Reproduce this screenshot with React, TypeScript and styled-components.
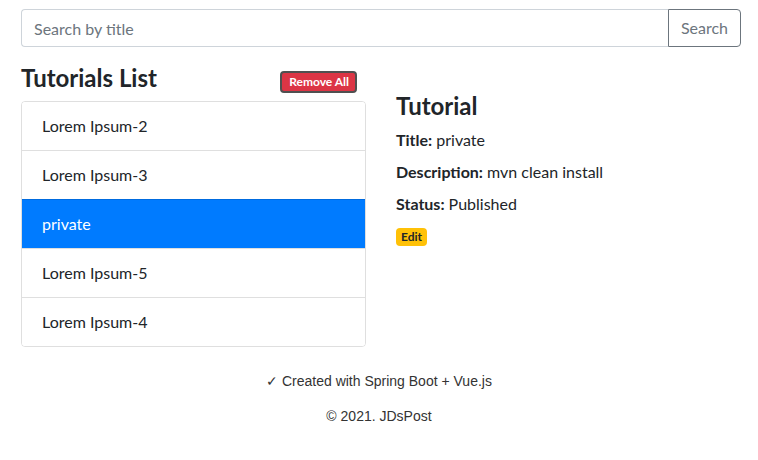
import React from "react";
import styled, { createGlobalStyle } from "styled-components";

const GlobalStyle = createGlobalStyle`
  html, body { margin: 0; padding: 0; background: #fff; }
  body {
    font-family: Lato, "Open Sans", sans-serif;
    font-size: 16px;
    line-height: 1.5;
    color: #212529;
  }
  * { box-sizing: border-box; }
`;

const Page = styled.div`
  width: 720px;
  margin-left: 21px;
  padding-top: 9px;
`;

const InputGroup = styled.div`
  display: flex;
  width: 100%;
  margin-bottom: 16px;
`;

const SearchInput = styled.input`
  flex: 1;
  height: 38px;
  padding: 6px 12px;
  font-family: inherit;
  font-size: 16px;
  color: #495057;
  border: 1px solid #ced4da;
  border-right: none;
  border-radius: 4px 0 0 4px;
  outline: none;
  &::placeholder { color: #6c757d; }
`;

const OutlineButton = styled.button`
  height: 38px;
  padding: 6px 12px;
  font-family: inherit;
  font-size: 16px;
  line-height: 24px;
  color: #6c757d;
  background: #fff;
  border: 1px solid #6c757d;
  border-radius: 0 4px 4px 0;
`;

const Row = styled.div`
  display: grid;
  grid-template-columns: 345px 345px;
  column-gap: 30px;
`;

const Column = styled.div<{ $top?: number }>`
  padding-top: ${(p) => p.$top ?? 0}px;
`;

const HeaderRow = styled.div`
  display: flex;
  justify-content: space-between;
  align-items: flex-end;
  margin-bottom: 9px;
`;

const Heading = styled.h4`
  margin: 0;
  font-size: 24px;
  font-weight: 700;
  line-height: 29px;
  color: #212529;
`;

const DetailHeading = styled(Heading)`
  margin-bottom: 8px;
`;

const Badge = styled.span<{ $variant: "danger" | "warning" }>`
  display: inline-block;
  padding: 3px 5px;
  font-size: 12px;
  font-weight: 700;
  line-height: 12px;
  border-radius: 4px;
  color: ${(p) => (p.$variant === "danger" ? "#fff" : "#212529")};
  background: ${(p) => (p.$variant === "danger" ? "#dc3545" : "#ffc107")};
`;

const RemoveButton = styled(Badge).attrs({ as: "button" })`
  font-family: inherit;
  border: 2px solid #505050;
  padding: 3px 6px 3px 7px;
  margin-right: 9px;
  margin-bottom: -1px;
`;

const ListGroup = styled.ul`
  list-style: none;
  margin: 0;
  padding: 0;
  border: 1px solid rgba(0, 0, 0, 0.125);
  border-radius: 4px;
  overflow: hidden;
`;

const ListItem = styled.li<{ $active?: boolean }>`
  padding: 12px 20px;
  line-height: 24px;
  background: ${(p) => (p.$active ? "#007bff" : "#fff")};
  color: ${(p) => (p.$active ? "#fff" : "#212529")};
  & + & { border-top: 1px solid rgba(0, 0, 0, 0.125); }
`;

const Field = styled.div`
  line-height: 24px;
  margin-bottom: 8px;
`;

const Label = styled.strong`
  font-weight: 700;
`;

const EditLine = styled.div`
  display: flex;
  padding-top: 4px;
`;

const Footer = styled.footer`
  display: flex;
  flex-direction: column;
  align-items: center;
  gap: 15px;
  padding-top: 24px;
  font-family: "Liberation Sans", Arial, sans-serif;
  font-size: 14px;
  line-height: 20px;
  color: #333;
`;

const FooterLine = styled.p`
  margin: 0;
`;

const items = ["Lorem Ipsum-2", "Lorem Ipsum-3", "private", "Lorem Ipsum-5", "Lorem Ipsum-4"];

export default function App() {
  return (
    <>
      <GlobalStyle />
      <Page>
        <InputGroup>
          <SearchInput placeholder="Search by title" />
          <OutlineButton>Search</OutlineButton>
        </InputGroup>
        <Row>
          <Column>
            <HeaderRow>
              <Heading>Tutorials List</Heading>
              <RemoveButton $variant="danger">Remove All</RemoveButton>
            </HeaderRow>
            <ListGroup>
              {items.map((t) => (
                <ListItem key={t} $active={t === "private"}>
                  {t}
                </ListItem>
              ))}
            </ListGroup>
          </Column>
          <Column $top={28}>
            <DetailHeading>Tutorial</DetailHeading>
            <Field>
              <Label>Title:</Label> private
            </Field>
            <Field>
              <Label>Description:</Label> mvn clean install
            </Field>
            <Field>
              <Label>Status:</Label> Published
            </Field>
            <EditLine>
              <Badge $variant="warning">Edit</Badge>
            </EditLine>
          </Column>
        </Row>
      </Page>
      <Footer>
        <FooterLine>✓ Created with Spring Boot + Vue.js</FooterLine>
        <FooterLine>© 2021. JDsPost</FooterLine>
      </Footer>
    </>
  );
}
